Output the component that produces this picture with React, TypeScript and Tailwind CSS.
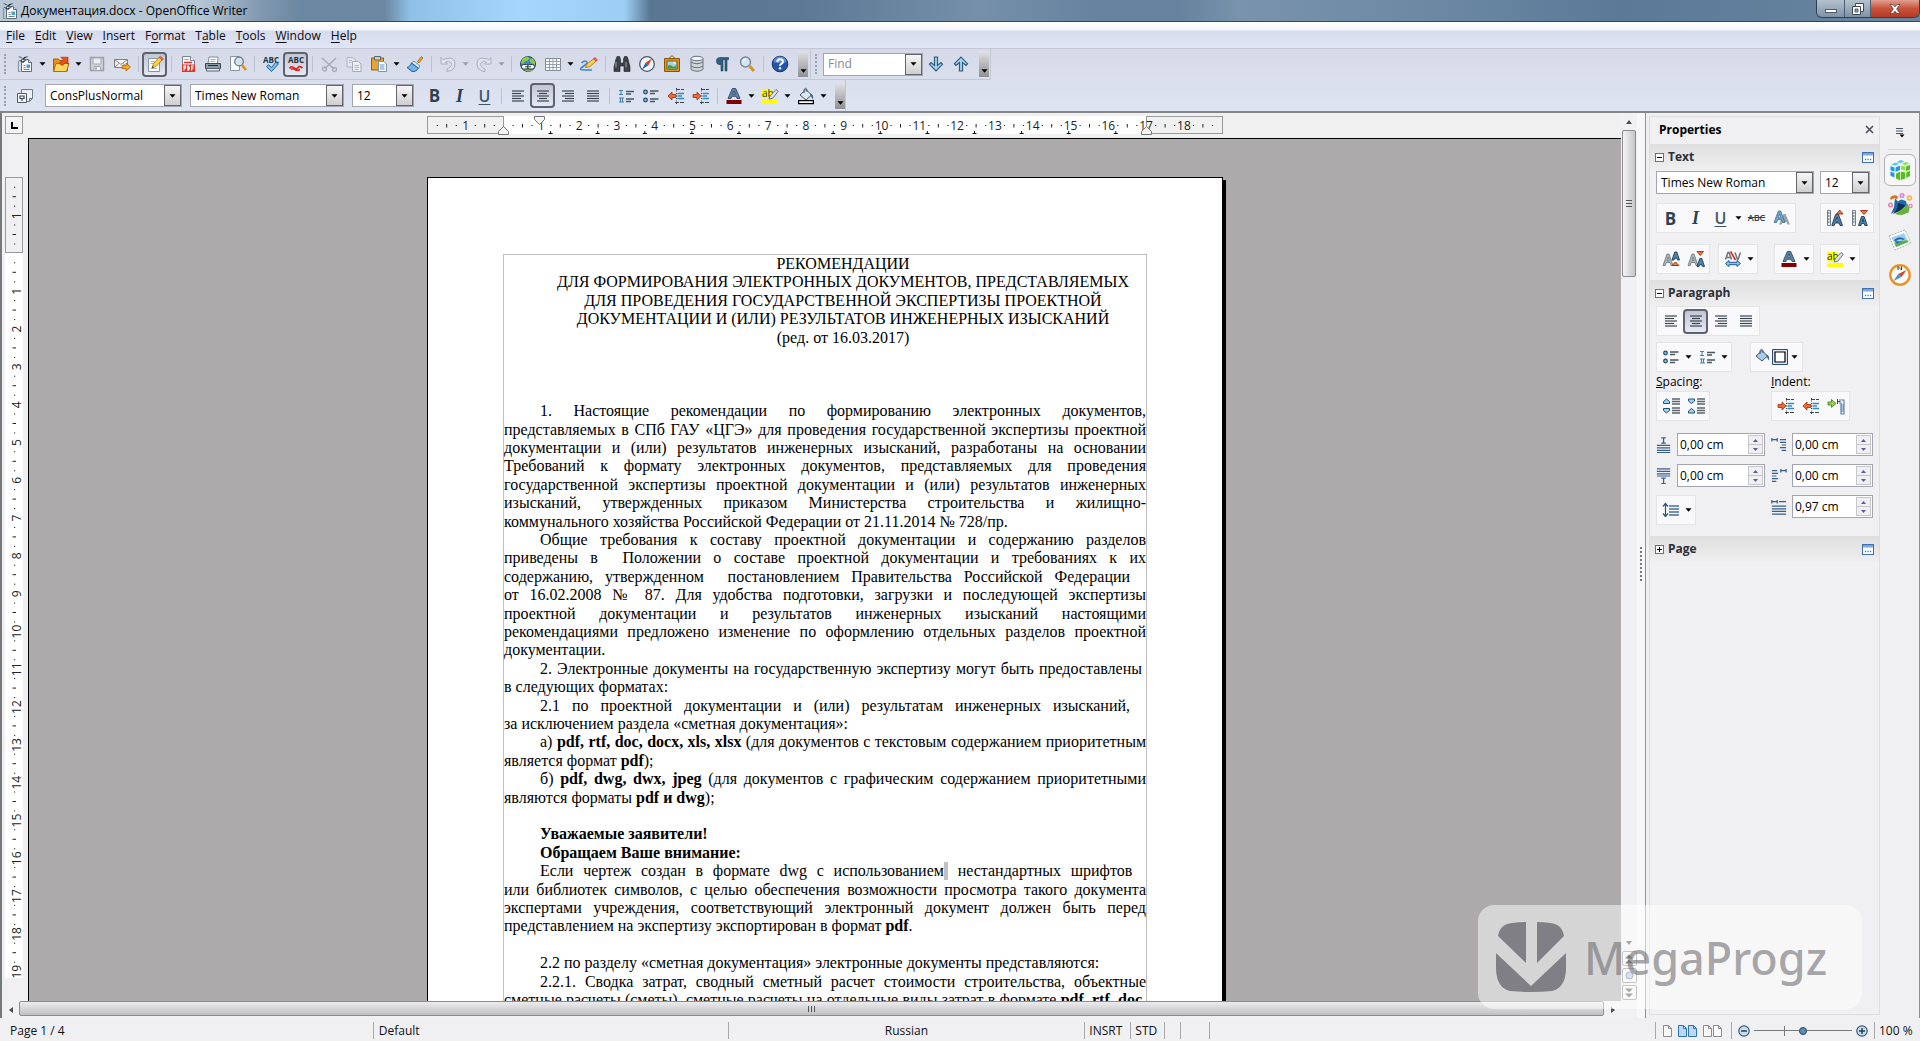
import type { ReactNode } from 'react'

// ---------- icon primitives ----------

type IconProps = { size?: number; children: ReactNode }

function Svg({ size = 18, children }: IconProps) {
  return (
    <svg width={size} height={size} viewBox="0 0 18 18" fill="none" aria-hidden="true" className="shrink-0">
      {children}
    </svg>
  )
}

const INK = '#2c4252'
const BLUE = '#2e75b6'

function Caret({ color = '#000' }: { color?: string }) {
  return (
    <svg width="7" height="4" viewBox="0 0 7 4" aria-hidden="true" className="shrink-0">
      <path d="M0.5 0.3h6L3.5 3.8z" fill={color} />
    </svg>
  )
}

function DocIcon() {
  return (
    <Svg>
      <path d="M5.500 4.500h7l3 3v9h-10z" fill="#fff" stroke="#5b6c7a" />
      <path d="M2.500 6v10.500h2" stroke="#8796a2" strokeWidth="1.200" />
      <path d="M12.500 4.500v3h3" fill="#dbe4ea" stroke="#5b6c7a" />
      <path d="M2 1.800q3-.8 4.500 1.700Q9 .8 12.500 1.800 9.500 2.300 7.500 4.600 5 2.500 2 1.800z" fill="#1d3444" />
      <path d="M2.500 5.500q2.500-1 4 1Q8 4.800 11 5.500 8.500 6 7 8 5 6 2.500 5.500z" fill="#1d3444" />
      <path d="M7.500 10.500h2M7.500 12.500h2M7.500 14.500h6" stroke="#6d8291" />
      <path d="M10.500 9.500H14V13h-3.500z" fill="#4d9bd6" />
    </Svg>
  )
}

function OpenIcon() {
  return (
    <Svg>
      <path d="M1.500 4h5l1 1.500h8V16h-14z" fill="#e8921a" stroke="#a85d0c" />
      <path d="M4 8.500h13L14.500 16.500h-13z" fill="#ffd65a" stroke="#b36a10" />
      <path d="M7 8.500l4-4-2.200-2.200H16v7l-2.200-2.300-3.300 3.500z" fill="#e2541e" stroke="#a5320d" strokeWidth=".7" />
    </Svg>
  )
}

function SaveIcon() {
  return (
    <Svg>
      <path d="M2.500 2.500h13v13h-13z" fill="#d0d3dc" stroke="#9a9ea9" strokeWidth="1.500" />
      <path d="M5 3h8v6H5z" fill="#eceef3" stroke="#a4a8b2" />
      <path d="M6 11.500h6.500v4H6z" fill="#f3f4f7" stroke="#a4a8b2" />
      <path d="M7 12.500h2v2H7z" fill="#9a9ea9" />
    </Svg>
  )
}

function MailIcon() {
  return (
    <Svg>
      <path d="M1.500 4.500h13v8h-13z" fill="#f4f4f4" stroke="#7d8085" />
      <path d="M1.500 4.500l6.500 5 6.500-5M1.500 12.500l4.500-4M14 12l-4-3.500" stroke="#8b8e93" />
      <path d="M9 10.500h4V8l4.500 4-4.500 4v-2.500H9z" fill="#f5a623" stroke="#a8650d" strokeWidth=".8" />
    </Svg>
  )
}

function EditIcon() {
  return (
    <Svg>
      <path d="M2.500 3.500h11v13h-11z" fill="#fff" stroke="#7e98aa" />
      <path d="M4.500 6.500h4M4.500 8.500h3M4.500 13.500h6.500" stroke="#9fb4c3" />
      <path d="M6 13l1.500-4.500L13.500 2 16.500 4.500 10.300 11.300z" fill="#fbd13b" stroke="#a87410" strokeWidth=".8" />
      <path d="M13 2.500l1.500-1.300 3 2.600-1.400 1.500z" fill="#e06a6a" stroke="#a83b3b" strokeWidth=".6" />
      <path d="M6 13l.7-2 1.200 1.200z" fill="#222" />
    </Svg>
  )
}

function PdfIcon() {
  return (
    <Svg>
      <path d="M3.500 1.500h8l4 4v5h-12z" fill="#f1f4f6" stroke="#7b868f" />
      <path d="M11.500 1.500v4h4" stroke="#7b868f" fill="#fff" />
      <path d="M5.500 4.500h4" stroke="#9aa6af" />
      <path d="M5 7.500h8" stroke="#d8362f" strokeWidth="1.500" />
      <path d="M3 9.500h13V17H3z" fill="#d8362f" />
      <path d="M5 15.800v-5h1.200q1.200 1.300 0 2.500H5M8.800 11v4.300h.6q1.800-2 0-4.300zM12.700 15.800v-4.800h2.300M12.700 13.300h1.800" stroke="#fff" strokeWidth="1.100" />
    </Svg>
  )
}

function PrintIcon() {
  return (
    <Svg>
      <path d="M5 2h9l-.5 7H4z" fill="#fff" stroke="#7d8992" />
      <path d="M6.500 4.500h5M6.200 6.500h5" stroke="#86b3d6" />
      <path d="M1.500 8.500h15v5h-15z" fill="#8d9ba6" stroke="#3a4954" />
      <path d="M2.500 13.500h13v2.500h-13z" fill="#e4e8eb" stroke="#56646f" />
      <path d="M4 10.500h10" stroke="#202b33" />
    </Svg>
  )
}

function PreviewIcon() {
  return (
    <Svg>
      <path d="M1.500 1.500h9v14h-9z" fill="#fff" stroke="#8994a0" />
      <circle cx="10" cy="6.500" r="4.300" fill="#cfe3f3" stroke="#6c7c8b" strokeWidth="1.300" />
      <path d="M13 10l4 5" stroke="#d9921c" strokeWidth="2.600" />
    </Svg>
  )
}

function AbcIcon({ wave = false }: { wave?: boolean }) {
  return (
    <Svg>
      <text x="9" y="8" textAnchor="middle" fontSize="8" fontWeight="700" fontFamily="Open Sans" fill="#1f3340">
        ABC
      </text>
      {wave ? (
        <path d="M2.500 13.500q1.500-3 4.200-.8t4.300 0 4.500.3M4 14.500q2-1.500 4 0t5 0" stroke="#d8251c" strokeWidth="1.700" />
      ) : (
        <path d="M4.500 11.500l2-1.800 3 2.800 4.500-5.500 2.500 1.800-7 7.700z" fill="#7cc0ef" stroke="#225f96" />
      )}
    </Svg>
  )
}

function CutIcon() {
  return (
    <Svg>
      <path d="M2 3l12 11M16 3L5 13.500" stroke="#a9acb7" strokeWidth="1.600" />
      <circle cx="4.500" cy="14" r="2" stroke="#a9acb7" strokeWidth="1.300" />
      <circle cx="14.500" cy="14.500" r="2" stroke="#a9acb7" strokeWidth="1.300" />
    </Svg>
  )
}

function CopyIcon() {
  return (
    <Svg>
      <path d="M2 2.500h6l2.500 2.500v7H2z" fill="#e3e6ee" stroke="#b0b4bf" />
      <path d="M7.500 6.500h6l2.500 2.500v7.500H7.500z" fill="#eceef4" stroke="#a9adb9" />
      <path d="M9.500 10.500h4.500M9.500 12.500h4.500M9.500 14.500h4M4 5.500h3M4 7.500h2.500" stroke="#b4b8c3" />
    </Svg>
  )
}

function PasteIcon() {
  return (
    <Svg>
      <path d="M1.500 3h12v12h-12z" fill="#e8a52b" stroke="#94600b" />
      <path d="M4.500 1.500h6V5h-6z" fill="#c7cdd3" stroke="#5e6871" />
      <path d="M8.500 6.500h5.500l2.500 2.500v7.500h-8z" fill="#fff" stroke="#7593ab" />
      <path d="M10 10h4.500M10 12h4.500M10 14h4.500" stroke="#5d92bd" />
    </Svg>
  )
}

function BrushIcon() {
  return (
    <Svg>
      <path d="M11.500 6.500l4-5L17 3l-4.200 5z" fill="#f0a533" stroke="#a05d0a" strokeWidth=".8" />
      <path d="M8 6l6 5-1.500 2.200L5.500 8z" fill="#dfe9f1" stroke="#4d7fa8" strokeWidth=".8" />
      <path d="M5.500 8l7 5.200c-1.500 2.300-4 3.800-6.500 3.300L1 12.500c2-.5 3.500-2 4.500-4.500z" fill="#62a8e5" stroke="#23609c" />
      <path d="M3.500 13l3-2.500M5.500 14.800l3-3M8 15.500l2.500-2.500" stroke="#a5cff2" />
    </Svg>
  )
}

function TurnIcon({ flip = false }: { flip?: boolean }) {
  return (
    <svg width="18" height="18" viewBox="0 0 18 18" fill="none" aria-hidden="true" className={flip ? '-scale-x-100' : ''}>
      <path
        d="M2 2.500v6.500h6.500L6.500 7q3.500-2 5.500 1t-4 6v2.500q8-1 8-7.500T10 3.200 4.300 4.800z"
        fill="#dde1ec"
        stroke="#acb0bc"
      />
    </svg>
  )
}

function LinkIcon() {
  return (
    <Svg>
      <circle cx="9" cy="9" r="7.500" fill="#3f86c6" stroke="#24476b" />
      <path d="M3 5q2-3.500 6-3.500l1.500 2L8 6 5.500 6.500 4 9 2 8zM11 4l3-.5 2 3.500v3l-3-1.500L11 7zM4 13l5 2.500 5-1.500-1 1.500-4 1.300-4-1.800z" fill="#8fca3f" />
      <rect x="2.500" y="9.500" width="7" height="4.500" rx="2.200" fill="#fff" stroke="#2b3b49" />
      <rect x="8.500" y="9.500" width="7" height="4.500" rx="2.200" fill="#fff" stroke="#2b3b49" />
      <path d="M6 11.800h6" stroke="#2b3b49" />
    </Svg>
  )
}

function TableIcon() {
  return (
    <Svg>
      <path d="M1.500 3.500h15v12h-15z" fill="#fff" stroke="#7f8c98" />
      <path d="M1.500 6.500h15M1.500 9.500h15M1.500 12.500h15M5.500 3.500v12M9 3.500v12M12.500 3.500v12" stroke="#94a0ab" />
    </Svg>
  )
}

function DrawIcon() {
  return (
    <Svg>
      <path d="M1.500 8q3-3 5-1.500T3 11.500t1 3.500 8 0" stroke="#3a86cc" strokeWidth="1.500" />
      <path d="M5.500 12.500L7 9l7-5.500 2.200 2.500-6.500 5.800z" fill="#fbcf4a" stroke="#a87410" strokeWidth=".8" />
      <path d="M13.500 3.800L15 2.500l2.500 2.300-1.300 1.500z" fill="#e06a6a" stroke="#a83b3b" strokeWidth=".6" />
    </Svg>
  )
}

function BinocularsIcon() {
  return (
    <Svg>
      <path d="M3 4l1-2.500h2.500L7.500 4v4h3V4l1-2.500H14L15 4l2 8v4.500h-6V11H7v5.500H1V12z" fill="#3c4247" stroke="#1d2124" strokeWidth=".6" />
      <path d="M3 12.500V7M13 12.500V7" stroke="#8b959c" strokeWidth="1.200" />
    </Svg>
  )
}

function CompassIcon() {
  return (
    <Svg>
      <circle cx="9" cy="9" r="7.300" fill="#f3f7fa" stroke="#4a5a68" strokeWidth="1.300" />
      <path d="M14 3.500L7.500 7.800l2.800 2.600z" fill="#d83a26" />
      <path d="M4 14.500l3.500-6.700 2.800 2.600z" fill="#2c62ae" />
    </Svg>
  )
}

function GalleryIcon() {
  return (
    <Svg>
      <path d="M9 .5l3 3H6z" stroke="#7a5312" />
      <path d="M1.500 3.500h15v13h-15z" fill="#d8931f" stroke="#8a5608" />
      <path d="M4 6h10v8H4z" fill="#9ed2f2" stroke="#704708" strokeWidth=".8" />
      <path d="M4.500 13.500v-2q2-2.500 4.500-.5t4.500-1.500v4z" fill="#4e9a3c" />
      <circle cx="11.500" cy="8" r="1.200" fill="#fff3a0" />
    </Svg>
  )
}

function DatabaseIcon() {
  return (
    <Svg>
      <path d="M3 3.500v11q6 3.500 12 0v-11" fill="#cfd4d8" stroke="#69747d" />
      <path d="M3 7q6 3.500 12 0M3 11q6 3.500 12 0" stroke="#69747d" />
      <ellipse cx="9" cy="3.500" rx="6" ry="2.200" fill="#f3f5f6" stroke="#69747d" />
    </Svg>
  )
}

function PilcrowIcon() {
  return (
    <Svg>
      <path d="M15.500 2.500H7a3.600 3.600 0 000 7.200h1V16h2V4.700h2V16h2V4.700h1.500z" fill="#2f5e80" stroke="#1e4361" strokeWidth=".6" />
    </Svg>
  )
}

function LensIcon() {
  return (
    <Svg>
      <circle cx="7.500" cy="7" r="5" fill="#cfe6f6" stroke="#7a8894" strokeWidth="1.500" />
      <path d="M11.500 11l4.500 5" stroke="#d9921c" strokeWidth="3" />
      <path d="M5 6.500q.5-2 2.500-2.200" stroke="#fff" strokeWidth="1.300" />
    </Svg>
  )
}

function HelpIcon() {
  return (
    <Svg>
      <circle cx="9" cy="9" r="7.800" fill="#2455ab" stroke="#16356f" />
      <path d="M2.500 7a6.600 6.600 0 0113 0q-6.500 2.500-13 0z" fill="#5d8ad0" />
      <path d="M6.300 7q0-2.800 2.800-2.800T11.900 6.700q0 1.300-1.500 2.100T9 10.800" stroke="#fff" strokeWidth="1.900" />
      <circle cx="9" cy="13.300" r="1.200" fill="#fff" />
    </Svg>
  )
}

function FindArrow({ up = false }: { up?: boolean }) {
  return (
    <svg width="16" height="18" viewBox="0 0 16 18" fill="none" aria-hidden="true" className={up ? 'rotate-180' : ''}>
      <path d="M6.500 2h3v8.500L13 7.500l1.500 1.800L8 15.800 1.500 9.300 3 7.500l3.500 3z" fill="#a8d3ec" stroke="#2d5c7d" strokeWidth="1.200" />
    </svg>
  )
}

function StylesIcon() {
  return (
    <Svg>
      <path d="M5.500 2.500h11v9l-3 3h-8z" fill="#eceff3" stroke="#6d7a87" />
      <path d="M16.500 11.500h-3v3" stroke="#6d7a87" />
      <path d="M1.500 6.500h9v9h-9z" fill="#f5f7f9" stroke="#4f5c68" />
      <path d="M4 9h4v2.500H4zM6 11.500V14" stroke="#3f4c58" strokeWidth="1.200" />
    </Svg>
  )
}

// Character style buttons draw their letter as text
function Letter({ kind }: { kind: 'B' | 'I' | 'U' }) {
  if (kind === 'B') return <span className="text-[17px] leading-none font-bold text-[#2c4252]">B</span>
  if (kind === 'I') return <span className="font-['Liberation_Serif',serif] text-lg leading-none font-bold text-[#2c4252] italic">I</span>
  return <span className="text-base leading-none font-semibold text-[#3d5768] underline underline-offset-2">U</span>
}

const alignRows = {
  left: [[3, 15], [3, 12], [3, 15], [3, 12], [3, 15]],
  center: [[3, 15], [5, 13], [3, 15], [5, 13], [3, 15]],
  right: [[3, 15], [6, 15], [3, 15], [6, 15], [3, 15]],
  justify: [[3, 15], [3, 15], [3, 15], [3, 15], [3, 15]],
}

function AlignIcon({ kind, color = '#3a4650' }: { kind: keyof typeof alignRows; color?: string }) {
  return (
    <Svg>
      {alignRows[kind].map(([from, to], i) => (
        <path key={i} d={`M${from} ${4 + i * 2.5}H${to}`} stroke={color} strokeWidth="1.200" />
      ))}
    </Svg>
  )
}

function NumberedIcon() {
  return (
    <Svg>
      <path d="M2 3.500h4M4 3.500v4M2 7.500h4M2 11h5M2 15h5M3.500 11v4M5.500 11v4" stroke="#4385a6" strokeWidth="1.100" />
      <path d="M9 4.500h8M9 7h5M9 12h8M9 14.500h5" stroke="#4b565f" strokeWidth="1.300" />
    </Svg>
  )
}

function BulletIcon() {
  return (
    <Svg>
      <circle cx="3.500" cy="5" r="1.800" fill="#7fc0e8" stroke="#1f4c6b" strokeWidth="1.200" />
      <circle cx="3.500" cy="13" r="1.800" fill="#7fc0e8" stroke="#1f4c6b" strokeWidth="1.200" />
      <path d="M8 4h8.500M8 6.500h5M8 12h8.500M8 14.500h5" stroke="#4b565f" strokeWidth="1.300" />
    </Svg>
  )
}

function IndentIcon({ increase = false }: { increase?: boolean }) {
  return (
    <Svg>
      <path d="M9 2.500h8M8 15.500h9" stroke="#3a4650" strokeWidth="1.200" strokeDasharray="4 1" />
      <path d="M10.500 6.500h6.500M10.500 9h4.500M10.500 11.500h6.500" stroke="#2f8ac6" strokeWidth="1.600" />
      <path d="M9.500 1v16" stroke="#3a4650" strokeDasharray="1 1.500" />
      <path
        d={increase ? 'M9 9L5 5v2.500H1v3h4V13z' : 'M1 9l4-4v2.500h4v3H5V13z'}
        fill="#ee6b32"
        stroke="#9c2f0c"
        strokeWidth=".8"
      />
    </Svg>
  )
}

function FontColorIcon() {
  return (
    <Svg>
      <path d="M3 11.500L7.300 1.500h3.400L15 11.500h-3l-.8-2.200H6.800L6 11.500zM7.700 7.200h2.600L9 3.800z" fill="#5c86a8" stroke="#1f3d55" strokeWidth=".8" />
      <path d="M1.500 13h15v4h-15z" fill="#800000" />
    </Svg>
  )
}

function HighlightIcon() {
  return (
    <Svg>
      <path d="M1 2h10v9H1zM1 13h16v4H1z" fill="#ffff00" />
      <text x="1" y="10" fontSize="10" fontFamily="Open Sans" fill="#1c2a33">
        ab
      </text>
      <path d="M8 12l1-3 6-6.500 2.200 1.800-5.500 7z" fill="#dfe3e6" stroke="#4c565e" strokeWidth=".8" />
    </Svg>
  )
}

function BucketIcon({ bar = true }: { bar?: boolean }) {
  return (
    <Svg>
      <path d="M3 8l6-5.500 5.500 5.500-5.500 5z" fill={bar ? '#dde6ec' : '#a9cdf0'} stroke="#3b566c" />
      <path d="M7 6V2.500q1.500-2.500 3 0V5" stroke="#3b566c" />
      <path d="M13 6.500q4 .5 3 6-1.500-2-2.500-4z" fill="#3a6a94" />
      {bar && <path d="M1.600 13.600h14.800v3H1.600z" fill="#fff" stroke="#000" strokeWidth="1.200" />}
    </Svg>
  )
}

// ---------- sidebar icons ----------

function StrikeIcon() {
  return <span className="text-[9px] font-semibold text-[#3b4146] line-through">ABC</span>
}

function ShadowAIcon() {
  return (
    <Svg>
      <path d="M6 15.500L10.500 5h2L17 15.500h-2.500l-1-2.500H9.700l-1 2.500z" fill="#9aa4ac" />
      <path d="M1 13.500L5.300 2h2.500l4.200 11.500H9.500l-1-2.800H4.700l-1 2.800zM5.300 8.800h2.500L6.500 5z" fill="#6fa5cb" stroke="#2b5675" strokeWidth=".6" />
    </Svg>
  )
}

function GrowIcon({ down = false }: { down?: boolean }) {
  return (
    <Svg>
      <path d="M1.500 1.500h3v15h-3z" fill="#e6eaed" stroke="#6f7f8b" />
      <path d="M2 4h1.500M2 7h1.500M2 10h1.500M2 13h1.500" stroke="#3f4c56" />
      <path
        d={down ? 'M7.500 16.500l3-9h2.600l3.200 9h-2.500l-.6-2h-2.600l-.6 2zM11.200 12.500h1.500l-.8-2.600z' : 'M5.800 16.500L9.500 5.500h3l4 11H14l-.8-2.500H9l-.8 2.500zM9.700 12h2.600L11 8.200z'}
        fill="#4f83aa"
        stroke="#1f3d55"
        strokeWidth=".9"
      />
      <path d={down ? 'M9.500 1.500h7L13 5.500z' : 'M10.500 5h6.500L13.800 1.200z'} fill="#f0783c" stroke="#a8290c" strokeWidth=".9" />
    </Svg>
  )
}

function ScriptIcon({ up = false }: { up?: boolean }) {
  return (
    <Svg>
      <path d="M1 15.500L5 4h2l4 11.500H9L8 12.500H4.200L3.200 15.500zM5 10.500h2.200L6 7z" fill="#aeb6bc" stroke="#6b757c" strokeWidth=".8" />
      <path
        d={up ? 'M10 10l2.800-8h2L17.500 10h-2l-.6-1.800h-2.200L12 10z' : 'M10 16.500l2.800-8h2l2.700 8h-2l-.6-1.800h-2.200L12 16.500z'}
        fill="#4f83aa"
        stroke="#1f3d55"
        strokeWidth=".9"
      />
      <path d={up ? 'M10 15.500h7L13.500 12z' : 'M10 1.500h6.500L13.300 5.500z'} fill="#f0783c" stroke="#a8290c" strokeWidth=".9" />
    </Svg>
  )
}

function KerningIcon() {
  return (
    <Svg>
      <path d="M1.500 9.500L4 2.500h1l2.500 7M2.500 7.500H6.500M11 2.500l2.500 7h.5l2.500-7" stroke="#6d757b" strokeWidth="1.500" />
      <path d="M6.500 1.500l5 8.500" stroke="#d6281c" strokeWidth="1.600" />
      <path d="M1.500 13.500L5 10.500v1.800h8v-1.800l3.500 3-3.500 3v-1.800H5v1.800z" fill="#8cc6f0" stroke="#1f5a95" />
    </Svg>
  )
}

function FrameSwatch() {
  return (
    <Svg>
      <path d="M1.500 1.500h15v15h-15z" fill="#dbe6f2" stroke="#2b4b74" />
      <path d="M4 4h10v10H4z" fill="#fff" stroke="#000" strokeWidth="1.200" />
    </Svg>
  )
}

function SpacingIcon({ inward = false }: { inward?: boolean }) {
  return (
    <Svg>
      <path
        d={inward ? 'M1.500 2h6v2L4.500 6.500 1.500 4zM1.500 16v-2l3-2.500 3 2.500v2z' : 'M1.500 6.500v-2L4.500 2l3 2.500v2zM1.500 11.500h6v2l-3 2.500-3-2.500z'}
        fill="#9fd0ef"
        stroke="#1c5078"
      />
      <path d="M10 2h8M10 4.500h8M10 7h8M10 11h8M10 13.500h8M10 16h8" stroke="#5a646c" strokeWidth="1.300" />
    </Svg>
  )
}

function HangingIcon() {
  return (
    <Svg>
      <path d="M1 5h3.500V2.500L9 6.500l-4.500 4V8H1z" fill="#97d24b" stroke="#3e7a14" strokeWidth=".8" />
      <path d="M10.500 2v5M10.500 4.500h3" stroke="#2c4b6b" />
      <path d="M12 3h5v14h-3V6h-2M14 8h3M14 10h3M14 12h3M14 14h3" stroke="#5d80a8" strokeWidth="1.200" />
    </Svg>
  )
}

const fieldIconPaths = {
  above: 'M6 1h5M8.500 1v6M6 7h5M1 9.500h15M1 12.300h15M1 15h15M1 17.500h15',
  below: 'M1 1h15M1 3.800h15M1 6.500h15M1 9h15M6 11.500h5M8.500 11.500v6M6 17.500h5',
  before: 'M1 3h6M1 1v4M7 1v4M10 3h7M10 6h7M12 9h5M10 12h7M12 15h5',
  after: 'M1 3h6M1 6h7M1 9h5M1 12h7M1 15h5M11 3h6M11 1v4M17 1v4',
  first: 'M1 3h6M1 1v4M7 1v4M9 3h8M1 8h16M1 11h16M1 14h16M1 17h16',
}

function FieldIcon({ kind }: { kind: keyof typeof fieldIconPaths }) {
  return (
    <Svg size={16}>
      <path d={fieldIconPaths[kind]} stroke="#36618f" strokeWidth="1.400" />
    </Svg>
  )
}

function LineSpacingIcon() {
  return (
    <Svg>
      <path d="M3.500 4v10M1 5.500l2.500-3 2.500 3M1 12.500l2.500 3 2.500-3" stroke="#2d5673" strokeWidth="1.200" />
      <path d="M7 5h10M7 8h10M7 11h10M7 14h10" stroke="#456f9c" strokeWidth="1.500" />
    </Svg>
  )
}

function CubeIcon() {
  return (
    <svg width="24" height="24" viewBox="0 0 24 24" aria-hidden="true">
      <path d="M3 6l8-4 10 3v13l-9 4-9-4z" fill="#fff" />
      <path d="M3 6.500l4.500-2 4 1.200-4.300 2zM8.500 4l4-2 4 1.300-4 2z" fill="#5bc8f5" />
      <path d="M2.500 8l4 1.500v4.300l-4-1.500zM7.500 9.500l4.500-2v4.500l-4.500 2zM2.500 13.500l4 1.500v4.500l-4-1.700z" fill="#1e9be0" />
      <path d="M13.500 6l4-2 4 1.200-4 2zM13 7.500l4.300 1v4.300l-4.300-1.200z" fill="#8ee04e" />
      <path d="M18 8.500l4-1.800v4.800l-4 1.800zM8 15.500l4.300-2 0 4.500v4.500L8 20.500zM13 13.500l4.300 1v6L13 22zM18.200 14.500l3.800-2v5.500l-3.800 2z" fill="#55bf22" />
    </svg>
  )
}

function StarsIcon() {
  return (
    <svg width="26" height="26" viewBox="0 0 26 26" aria-hidden="true">
      <path d="M3 6q3-4.500 8-1.500L10 7.500Q7 5 4 8z" fill="#d9731f" />
      <path d="M8 6.500l3 3 3-2 5 1.500 1 5-6 3-5 2-5 3 3-7z" fill="#1d6aa8" />
      <path d="M11 11l7 2-3 5-9 4 4-5z" fill="#10304f" />
      <path d="M15 17q4-2 5-6 4 5 1.500 9.500L15 23q-4 0-7-1z" fill="#67b33a" />
      <circle cx="15" cy="3.500" r="2.500" fill="#d77be0" />
      <circle cx="22.500" cy="6" r="2.700" fill="#f2b84c" />
      <circle cx="3.500" cy="13" r="2.500" fill="#f07cae" />
      <circle cx="23.500" cy="14" r="2.300" fill="#f07cae" />
      <circle cx="15" cy="3.500" r=".9" fill="#fff" />
      <circle cx="22.500" cy="6" r=".9" fill="#fff" />
      <circle cx="3.500" cy="13" r=".9" fill="#fff" />
      <circle cx="23.500" cy="14" r=".9" fill="#fff" />
    </svg>
  )
}

function PhotoIcon() {
  return (
    <svg width="26" height="26" viewBox="0 0 26 26" aria-hidden="true">
      <path d="M2 8l16-6 6 13-16 7z" fill="#fff" stroke="#a9b8a4" strokeDasharray="2 1" />
      <path d="M4.500 9.500L17 5l4.500 9L9 19z" fill="#9fd0f0" />
      <path d="M7.500 15q5-3 13.500-2.500l.5 1.500L9 19z" fill="#5fae45" />
      <path d="M7 12q5-5 11-1l-2 1q-3-2-7 1l5 1-4 1.500z" fill="#2a6cb0" />
    </svg>
  )
}

function NavigatorIcon() {
  return (
    <svg width="24" height="24" viewBox="0 0 24 24" aria-hidden="true">
      <circle cx="12" cy="12" r="9.700" fill="#fbfaf6" stroke="#e8922a" strokeWidth="2.400" />
      <path d="M10 7V3.500l3.500 3.500V3.500" stroke="#3b4146" fill="none" />
      <path d="M18.500 7l-5 7-3.300-3z" fill="#d8452c" />
      <path d="M5.500 18l4.700-7 3.300 3z" fill="#4f8fd0" />
    </svg>
  )
}

function MoreIcon() {
  return (
    <svg width="12" height="11" viewBox="0 0 12 11" aria-hidden="true">
      <rect x=".5" y=".5" width="11" height="10" fill="#fff" stroke="#3f6fae" />
      <path d="M1 1h10v2.500H1z" fill="#7ea8dc" />
      <path d="M3 7.500h1.200M5.500 7.500h1.200M8 7.500h1.200" stroke="#3f6fae" strokeWidth="1.300" />
    </svg>
  )
}

// ---------- toolbar parts ----------

function Tool({ label, active = false, children }: { label: string; active?: boolean; children: ReactNode }) {
  return (
    <button
      aria-label={label}
      aria-pressed={active}
      className={
        active
          ? 'flex size-[25px] shrink-0 items-center justify-center rounded-sm border-2 border-[#5d6370] bg-linear-to-b from-[#c3c6d2] to-[#e6e9f4]'
          : 'flex size-[25px] shrink-0 items-center justify-center'
      }
    >
      {children}
    </button>
  )
}

function Drop({ label, muted = false }: { label: string; muted?: boolean }) {
  return (
    <button aria-label={label} className="flex h-[25px] w-[11px] shrink-0 items-center justify-center">
      <Caret color={muted ? '#9a9eab' : '#000'} />
    </button>
  )
}

function Sep() {
  return (
    <span className="flex w-2 shrink-0 justify-center">
      <span className="h-4 w-px bg-[#bcc0cf]" />
    </span>
  )
}

function Grip() {
  return <span className="mr-[5px] ml-1 h-5 w-[3px] shrink-0 border-l-2 border-dotted border-[#9a9eae]" />
}

function Overflow() {
  return (
    <button
      aria-label="More controls"
      className="ml-1.5 flex h-[26px] w-[10px] shrink-0 items-end justify-center bg-linear-to-b from-[#e2e2e6] to-[#8f9094] pb-1"
    >
      <Caret />
    </button>
  )
}

function Combo({ label, value, className }: { label: string; value: string; className: string }) {
  return (
    <span className={`flex h-[23px] shrink-0 items-stretch border border-[#a3a6b0] bg-white ${className}`}>
      <select aria-label={label} className="min-w-0 flex-1 appearance-none pl-1 text-xs outline-none">
        <option>{value}</option>
      </select>
      <ComboArrow />
    </span>
  )
}

function ComboArrow() {
  return (
    <span className="flex w-[17px] shrink-0 items-center justify-center border border-[#63666c] bg-linear-to-b from-[#f6f6f6] to-[#cfcfd1]">
      <Caret />
    </span>
  )
}

function TitleBar() {
  return (
    <header className="relative flex h-[22px] shrink-0 items-center border-b border-[#33475c] bg-[linear-gradient(90deg,#b9c8d6_0,#b6c6d5_200px,#8199b0_260px,#6c87a2_300px,#6c87a2_385px,#8fc0e6_410px,#a5d6fb_520px,#9ccdf2_625px,#5a7692_650px,#5c7894_800px,#7690aa_980px,#66829e_1100px,#66829e_1180px,#7993ac_1240px,#6f8aa5_1400px,#5a7a98_1620px,#6985a0_100%)] pl-px">
      <DocIcon />
      <h1 className="ml-0.5 text-xs text-black">Документация.docx - OpenOffice Writer</h1>
      <div className="ml-auto flex h-[18px] self-start overflow-hidden rounded-b-md border border-t-0 border-[#2f3e4e]">
        <button aria-label="Minimize" className="flex w-7 items-center justify-center border-r border-[#4a5c6e] bg-linear-to-b from-[#b4c2cf] to-[#7f93a6] pt-1">
          <span className="h-1 w-3 border border-[#4a5a69] bg-white" />
        </button>
        <button aria-label="Restore" className="flex w-[26px] items-center justify-center border-r border-[#4a5c6e] bg-linear-to-b from-[#b4c2cf] to-[#7f93a6]">
          <svg width="12" height="12" viewBox="0 0 12 12" fill="none">
            <path d="M3.500 .5h8v8h-8z" fill="#fff" stroke="#3c4a58" />
            <path d="M.5 3.500h8v8h-8z" fill="#fff" stroke="#3c4a58" />
            <path d="M3 6h3v3H3z" fill="#8ea0b1" stroke="#3c4a58" strokeWidth=".8" />
          </svg>
        </button>
        <button aria-label="Close" className="flex w-[48px] items-center justify-center bg-linear-to-b from-[#e0a093] via-[#c9503a] to-[#b53c22]">
          <svg width="12" height="10" viewBox="0 0 12 10">
            <path d="M1 .5h3l2 2.300L8 .5h3L7.700 5 11 9.500H8L6 7.200 4 9.500H1L4.300 5z" fill="#fff" stroke="#5d3a35" strokeWidth=".8" />
          </svg>
        </button>
      </div>
    </header>
  )
}

const menus = [
  ['', 'F', 'ile'],
  ['', 'E', 'dit'],
  ['', 'V', 'iew'],
  ['', 'I', 'nsert'],
  ['F', 'o', 'rmat'],
  ['T', 'a', 'ble'],
  ['', 'T', 'ools'],
  ['', 'W', 'indow'],
  ['', 'H', 'elp'],
]

function MenuBar() {
  return (
    <nav className="flex h-[27px] shrink-0 items-center gap-2.5 border-b border-[#c4c8d6] bg-[linear-gradient(180deg,#ffffff_0,#f4f7fd_8px,#d6dbea_9px,#e1e6f6_100%)] px-1.5 pt-0.5">
      {menus.map(([before, key, after]) => (
        <button key={before + key + after} className="text-xs text-[#0a0a14]">
          {before}
          <span className="underline underline-offset-2">{key}</span>
          {after}
        </button>
      ))}
    </nav>
  )
}

function StandardToolbar() {
  return (
    <div className="flex h-[31px] shrink-0 items-center">
      <div className="flex h-full items-center border-r border-b border-[#c3c7d5]">
        <Grip />
        <Tool label="New"><DocIcon /></Tool>
        <Drop label="New document type" />
        <Tool label="Open"><OpenIcon /></Tool>
        <Drop label="Recent documents" />
        <Tool label="Save"><SaveIcon /></Tool>
        <Tool label="Send by e-mail"><MailIcon /></Tool>
        <Sep />
        <Tool label="Edit file" active><EditIcon /></Tool>
        <Sep />
        <Tool label="Export as PDF"><PdfIcon /></Tool>
        <Tool label="Print"><PrintIcon /></Tool>
        <Tool label="Page preview"><PreviewIcon /></Tool>
        <Sep />
        <Tool label="Spelling"><AbcIcon /></Tool>
        <Tool label="Auto spellcheck" active><AbcIcon wave /></Tool>
        <Sep />
        <Tool label="Cut"><CutIcon /></Tool>
        <Tool label="Copy"><CopyIcon /></Tool>
        <Tool label="Paste"><PasteIcon /></Tool>
        <Drop label="Paste special" />
        <Tool label="Format paintbrush"><BrushIcon /></Tool>
        <Sep />
        <Tool label="Undo"><TurnIcon /></Tool>
        <Drop label="Undo list" muted />
        <Tool label="Redo"><TurnIcon flip /></Tool>
        <Drop label="Redo list" muted />
        <Sep />
        <Tool label="Hyperlink"><LinkIcon /></Tool>
        <Tool label="Table"><TableIcon /></Tool>
        <Drop label="Table size" />
        <Tool label="Show draw functions"><DrawIcon /></Tool>
        <Sep />
        <Tool label="Find and replace"><BinocularsIcon /></Tool>
        <Tool label="Navigator"><CompassIcon /></Tool>
        <Tool label="Gallery"><GalleryIcon /></Tool>
        <Tool label="Data sources"><DatabaseIcon /></Tool>
        <Tool label="Nonprinting characters"><PilcrowIcon /></Tool>
        <Tool label="Zoom"><LensIcon /></Tool>
        <Sep />
        <Tool label="Help"><HelpIcon /></Tool>
        <Overflow />
        <span className="w-0.5" />
      </div>
      <div className="flex h-full items-center border-r border-b border-[#c3c7d5]">
        <Grip />
        <span className="flex h-[23px] w-[100px] items-stretch border border-[#a3a6b0] bg-white">
          <input aria-label="Find" placeholder="Find" className="min-w-0 flex-1 pl-1 text-xs outline-none placeholder:text-[#8a8a8a]" />
          <ComboArrow />
        </span>
        <Tool label="Find next"><FindArrow /></Tool>
        <Tool label="Find previous"><FindArrow up /></Tool>
        <Overflow />
        <span className="w-px" />
      </div>
    </div>
  )
}

function FormattingToolbar() {
  return (
    <div className="flex h-[31px] shrink-0 items-center">
      <div className="flex h-full items-center border-r border-[#c3c7d5]">
        <Grip />
        <Tool label="Styles and formatting"><StylesIcon /></Tool>
        <Combo label="Apply style" value="ConsPlusNormal" className="ml-2 w-[137px]" />
        <Combo label="Font name" value="Times New Roman" className="ml-2 w-[154px]" />
        <Combo label="Font size" value="12" className="mr-2 ml-2 w-[62px]" />
        <Tool label="Bold"><Letter kind="B" /></Tool>
        <Tool label="Italic"><Letter kind="I" /></Tool>
        <Tool label="Underline"><Letter kind="U" /></Tool>
        <Sep />
        <Tool label="Align left"><AlignIcon kind="left" /></Tool>
        <Tool label="Centered" active><AlignIcon kind="center" /></Tool>
        <Tool label="Align right"><AlignIcon kind="right" /></Tool>
        <Tool label="Justified"><AlignIcon kind="justify" /></Tool>
        <Sep />
        <Tool label="Numbering"><NumberedIcon /></Tool>
        <Tool label="Bullets"><BulletIcon /></Tool>
        <Tool label="Decrease indent"><IndentIcon /></Tool>
        <Tool label="Increase indent"><IndentIcon increase /></Tool>
        <Sep />
        <Tool label="Font color"><FontColorIcon /></Tool>
        <Drop label="Font color list" />
        <Tool label="Highlighting"><HighlightIcon /></Tool>
        <Drop label="Highlighting list" />
        <Tool label="Background color"><BucketIcon /></Tool>
        <Drop label="Background color list" />
        <Overflow />
      </div>
    </div>
  )
}

// ---------- rulers ----------

const CM = 37.8
const range = (from: number, to: number) => Array.from({ length: to - from + 1 }, (_, i) => from + i)

function HorizontalRuler() {
  const zero = 76.5
  const end = 719.5
  return (
    <svg width="796" height="25" viewBox="0 0 796 25" fill="none" aria-hidden="true" className="shrink-0">
      <rect x="0" y="3" width="796" height="18" fill="#fff" />
      <rect x=".5" y="3.500" width="76" height="17" fill="#f0f0f0" stroke="#9a9a9a" />
      <rect x={end} y="3.500" width="76" height="17" fill="#f0f0f0" stroke="#9a9a9a" />
      {range(-1, 18).map((n) => (
        <g key={n}>
          {n !== 0 && (
            <text x={zero + n * CM} y="17" textAnchor="middle" fontSize="12" fill="#222">
              {Math.abs(n)}
            </text>
          )}
          <path d={`M${zero + n * CM + 9} 12.500h1.200M${zero + n * CM + 28} 12.500h1.200`} stroke="#222" />
          <path d={`M${zero + n * CM + 19} 11v3.500`} stroke="#222" />
        </g>
      ))}
      <path d={`M${zero - CM - 10} 12.500h1.200M${zero - CM - 29} 12.500h1.200`} stroke="#222" />
      <path d={`M${zero - CM - 19} 11v3.500`} stroke="#222" />
      {range(1, 13).map((n) => (
        <path key={n} d={`M${zero + n * 47.1 - 2} 20.500h4M${zero + n * 47.1} 18v3`} stroke="#111" />
      ))}
      <path d={`M${zero - 5} 21.500v-3l5-5 5 5v3z`} fill="#f4f4f4" stroke="#777" />
      <path d={`M${end - 5} 21.500v-3l5-5 5 5v3z`} fill="#f4f4f4" stroke="#777" />
      <path d="M107.500 3.500h10v3l-5 5-5-5z" fill="#f4f4f4" stroke="#777" />
    </svg>
  )
}

function VerticalRuler() {
  const zero = 76.5
  return (
    <svg width="23" height="802" viewBox="0 0 23 802" fill="none" aria-hidden="true">
      <rect x="0" y="0" width="18" height="801" fill="#fff" />
      <rect x=".5" y=".5" width="17" height="75" fill="#f0eff1" stroke="#9a9a9a" />
      {range(-1, 19).map((n) => {
        const y = zero + n * CM
        return (
          <g key={n}>
            {n !== 0 && (
              <text x="16" y={y} transform={`rotate(-90 16 ${y})`} textAnchor="middle" fontSize="12" fill="#222">
                {Math.abs(n)}
              </text>
            )}
            <path d={`M9 ${y - 9.5}h1.200M9 ${y - 28.5}h1.200M7.500 ${y - 19}h3.500`} stroke="#222" />
          </g>
        )
      })}
    </svg>
  )
}

// ---------- document ----------

type Line = {
  text: ReactNode
  kind?: 'center' | 'fill' | 'plain'
  indent?: boolean
}

const lines: Line[] = [
  { text: 'РЕКОМЕНДАЦИИ', kind: 'center' },
  { text: 'ДЛЯ ФОРМИРОВАНИЯ ЭЛЕКТРОННЫХ ДОКУМЕНТОВ, ПРЕДСТАВЛЯЕМЫХ', kind: 'center' },
  { text: 'ДЛЯ ПРОВЕДЕНИЯ ГОСУДАРСТВЕННОЙ ЭКСПЕРТИЗЫ ПРОЕКТНОЙ', kind: 'center' },
  { text: 'ДОКУМЕНТАЦИИ И (ИЛИ) РЕЗУЛЬТАТОВ ИНЖЕНЕРНЫХ ИЗЫСКАНИЙ', kind: 'center' },
  { text: '(ред. от 16.03.2017)', kind: 'center' },
  { text: '' },
  { text: '' },
  { text: '' },
  { text: '1. Настоящие рекомендации по формированию электронных документов,', indent: true, kind: 'fill' },
  { text: 'представляемых в СПб ГАУ «ЦГЭ» для проведения государственной экспертизы проектной', kind: 'fill' },
  { text: 'документации и (или) результатов инженерных изысканий, разработаны на основании', kind: 'fill' },
  { text: 'Требований к формату электронных документов, представляемых для проведения', kind: 'fill' },
  { text: 'государственной экспертизы проектной документации и (или) результатов инженерных', kind: 'fill' },
  { text: 'изысканий, утвержденных приказом Министерства строительства и жилищно-', kind: 'fill' },
  { text: 'коммунального хозяйства Российской Федерации от 21.11.2014 № 728/пр.' },
  { text: 'Общие требования к составу проектной документации и содержанию разделов', indent: true, kind: 'fill' },
  { text: 'приведены в \u00a0Положении о составе проектной документации и требованиях к их', kind: 'fill' },
  { text: 'содержанию, утвержденном \u00a0постановлением Правительства Российской Федерации\u00a0\u00a0', kind: 'fill' },
  { text: 'от 16.02.2008 № 87. Для удобства подготовки, загрузки и последующей экспертизы', kind: 'fill' },
  { text: 'проектной документации и результатов инженерных изысканий настоящими', kind: 'fill' },
  { text: 'рекомендациями предложено изменение по оформлению отдельных разделов проектной', kind: 'fill' },
  { text: 'документации.' },
  { text: '2. Электронные документы на государственную экспертизу могут быть предоставлены\u00a0', indent: true, kind: 'fill' },
  { text: 'в следующих форматах:' },
  { text: '2.1 по проектной документации и (или) результатам инженерных изысканий,\u00a0\u00a0', indent: true, kind: 'fill' },
  { text: 'за исключением раздела «сметная документация»:' },
  {
    text: (
      <>
        а) <b>pdf, rtf, doc, docx, xls, xlsx</b> (для документов с текстовым содержанием приоритетным
      </>
    ),
    indent: true,
    kind: 'fill',
  },
  {
    text: (
      <>
        является формат <b>pdf</b>);
      </>
    ),
  },
  {
    text: (
      <>
        б) <b>pdf, dwg, dwx, jpeg</b> (для документов с графическим содержанием приоритетными
      </>
    ),
    indent: true,
    kind: 'fill',
  },
  {
    text: (
      <>
        являются форматы <b>pdf и dwg</b>);
      </>
    ),
  },
  { text: '' },
  { text: <b>Уважаемые заявители!</b>, indent: true },
  { text: <b>Обращаем Ваше внимание:</b>, indent: true },
  {
    text: (
      <>
        Если чертеж создан в формате dwg с использованием
        <span className="inline-block h-[18px] w-1 bg-[#c1c1c5] align-bottom" /> нестандартных шрифтов{'\u00a0\u00a0'}
      </>
    ),
    indent: true,
    kind: 'fill',
  },
  { text: 'или библиотек символов, с целью обеспечения возможности просмотра такого документа', kind: 'fill' },
  { text: 'экспертами учреждения, соответствующий электронный документ должен быть перед', kind: 'fill' },
  {
    text: (
      <>
        представлением на экспертизу экспортирован в формат <b>pdf</b>.
      </>
    ),
  },
  { text: '' },
  { text: '2.2 по разделу «сметная документация» электронные документы представляются:', indent: true },
  { text: '2.2.1. Сводка затрат, сводный сметный расчет стоимости строительства, объектные', indent: true, kind: 'fill' },
  {
    text: (
      <>
        сметные расчеты (сметы), сметные расчеты на отдельные виды затрат в формате <b>pdf, rtf, doc,</b>
      </>
    ),
    kind: 'fill',
  },
]

const lineStyles = {
  center: 'pl-9 text-center',
  fill: '[text-align-last:justify]',
  plain: '',
}

// Two rows in five are 19px, the rest 18px: the screen rounding of single-spaced 12pt text
function DocumentPage() {
  return (
    <article className="mx-auto mt-[38px] h-[1123px] w-[796px] shrink-0 border border-black bg-white pt-[76px] shadow-[3px_3px_0_#000]">
      <div className="mx-[75px] h-[971px] border border-[#c0c0c0] font-['Liberation_Serif','Times_New_Roman',serif] text-base text-black">
        {lines.map((line, i) => (
          <div
            key={i}
            className={`h-[18px] leading-[18px] whitespace-nowrap nth-[5n+2]:h-[19px] nth-[5n+4]:h-[19px] ${lineStyles[line.kind ?? 'plain']} ${line.indent ? 'pl-9' : ''}`}
          >
            {line.text}
          </div>
        ))}
      </div>
    </article>
  )
}

// ---------- scrollbars ----------

function ScrollArrow({ dir, label }: { dir: 'up' | 'down' | 'left' | 'right'; label: string }) {
  const paths = { up: 'M1 6l3-4 3 4z', down: 'M1 2l3 4 3-4z', left: 'M6 1L2 4l4 3z', right: 'M2 1l4 3-4 3z' }
  return (
    <button aria-label={label} className="flex size-[17px] shrink-0 items-center justify-center">
      <svg width="8" height="8" viewBox="0 0 8 8">
        <path d={paths[dir]} fill="#4a4a4a" />
      </svg>
    </button>
  )
}

function VerticalScroll() {
  return (
    <div className="flex w-4 shrink-0 flex-col items-center bg-[#f1f0f2]">
      <ScrollArrow dir="up" label="Scroll up" />
      <div className="flex h-[147px] w-3.5 flex-col items-center justify-center gap-0.5 rounded-xs border border-[#8c8c8e] bg-linear-to-r from-[#f4f4f4] to-[#c6c6c9]">
        <span className="h-px w-1.5 bg-[#555]" />
        <span className="h-px w-1.5 bg-[#555]" />
        <span className="h-px w-1.5 bg-[#555]" />
      </div>
      <div className="flex-1" />
      <ScrollArrow dir="down" label="Scroll down" />
      <div className="flex flex-col gap-0.5 pb-px">
        <button aria-label="Previous page" className="flex size-[15px] items-center justify-center rounded-xs border border-[#8c8c8e] bg-[#f4f4f6]">
          <svg width="8" height="10" viewBox="0 0 8 10">
            <path d="M0 4.500L4 .5l4 4zM0 9.500l4-4 4 4z" fill="#111" />
          </svg>
        </button>
        <button aria-label="Navigation" className="flex size-[15px] items-center justify-center rounded-xs border border-[#8c8c8e] bg-[#f4f4f6]">
          <svg width="9" height="9" viewBox="0 0 9 9">
            <circle cx="4.500" cy="4.500" r="3.500" fill="#a9c4e6" stroke="#56739b" />
          </svg>
        </button>
        <button aria-label="Next page" className="flex size-[15px] items-center justify-center rounded-xs border border-[#8c8c8e] bg-[#f4f4f6]">
          <svg width="8" height="10" viewBox="0 0 8 10">
            <path d="M0 .5h8l-4 4zM0 5.500h8l-4 4z" fill="#555" />
          </svg>
        </button>
      </div>
    </div>
  )
}

function HorizontalScroll() {
  return (
    <div className="flex h-[17px] shrink-0 items-start bg-[#f1f0f2]">
      <ScrollArrow dir="left" label="Scroll left" />
      <div className="flex h-[15px] flex-1 items-center justify-center gap-0.5 rounded-xs border border-[#8c8c8e] bg-linear-to-b from-[#ececee] to-[#c0c0c2]">
        <span className="h-1.5 w-px bg-[#555]" />
        <span className="h-1.5 w-px bg-[#555]" />
        <span className="h-1.5 w-px bg-[#555]" />
      </div>
      <ScrollArrow dir="right" label="Scroll right" />
      <span className="w-4" />
    </div>
  )
}

function Workspace() {
  return (
    <main className="flex min-w-0 flex-1 flex-col border-l-2 border-[#77787a]">
      <div className="flex min-h-0 flex-1">
        <div className="flex min-w-0 flex-1 flex-col">
          <div className="flex h-[25px] shrink-0 bg-[#f0f0f0]">
            <div className="w-[27px] shrink-0 pt-[3px] pl-[3px]">
              <button aria-label="Tab type" className="flex size-[18px] items-center justify-center border border-[#9a9a9a] bg-[#f4f4f4]">
                <span className="size-[7px] border-b-2 border-l-2 border-black" />
              </button>
            </div>
            <div className="flex min-w-0 flex-1 justify-center">
              <HorizontalRuler />
            </div>
          </div>
          <div className="flex min-h-0 flex-1 bg-[#f0eff1]">
            <div className="w-[26px] shrink-0 overflow-hidden pt-[39px] pl-[3px]">
              <VerticalRuler />
            </div>
            <div className="flex min-w-0 flex-1 overflow-hidden border-t border-l border-black bg-[#acaaab]">
              <DocumentPage />
            </div>
          </div>
        </div>
        <VerticalScroll />
      </div>
      <HorizontalScroll />
    </main>
  )
}

// ---------- sidebar ----------

function SectionHeader({ title, open = true }: { title: string; open?: boolean }) {
  return (
    <div className="flex h-[26px] items-center bg-linear-to-b from-[#dedede] to-[#efeff0] pr-[5px] pl-[5px]">
      <button aria-label={`Toggle ${title}`} className="flex size-[9px] items-center justify-center border border-[#6f6f6f] bg-white">
        <svg width="5" height="5" viewBox="0 0 5 5">
          <path d={open ? 'M0 2.500h5' : 'M0 2.500h5M2.500 0v5'} stroke="#000" />
        </svg>
      </button>
      <h3 className="ml-1 flex-1 text-xs font-bold text-[#2b3038]">{title}</h3>
      <button aria-label={`${title} options`}>
        <MoreIcon />
      </button>
    </div>
  )
}

function Group({ className = 'px-px', children }: { className?: string; children: ReactNode }) {
  return (
    <div className={`flex h-[30px] items-center border border-[#e4e4e6] bg-[#f9f9fb] ${className}`}>{children}</div>
  )
}

type SpinProps = { label: string; value: string; icon: keyof typeof fieldIconPaths }

function Spin({ label, value, icon }: SpinProps) {
  return (
    <div className="flex items-center gap-[5px]">
      <FieldIcon kind={icon} />
      <span className="flex h-[23px] min-w-0 flex-1 items-stretch border border-[#a3a6b0] bg-white p-px">
        <input aria-label={label} defaultValue={value} className="min-w-0 flex-1 pl-px text-xs outline-none" />
        <span className="flex w-[15px] flex-col">
          <button aria-label={`Increase ${label}`} className="flex flex-1 items-center justify-center border border-[#c6c6cb] bg-[#f0f0f2]">
            <svg width="5" height="3" viewBox="0 0 5 3">
              <path d="M0 3L2.500 0 5 3z" fill="#5a5a9c" />
            </svg>
          </button>
          <button aria-label={`Decrease ${label}`} className="flex flex-1 items-center justify-center border border-t-0 border-[#c6c6cb] bg-[#f0f0f2]">
            <svg width="5" height="3" viewBox="0 0 5 3">
              <path d="M0 0h5L2.500 3z" fill="#5a5a9c" />
            </svg>
          </button>
        </span>
      </span>
    </div>
  )
}

function PropertiesPanel() {
  return (
    <section className="my-[3px] flex w-[231px] flex-col border border-[#dddde0] bg-[#f0eff1]">
      <div className="flex h-[27px] items-center px-[9px] pb-0.5">
        <h2 className="flex-1 text-xs font-bold text-black">Properties</h2>
        <button aria-label="Close sidebar" className="-mr-1">
          <svg width="9" height="9" viewBox="0 0 9 9">
            <path d="M1 1l7 7M8 1L1 8" stroke="#4b4f57" strokeWidth="1.600" />
          </svg>
        </button>
      </div>

      <SectionHeader title="Text" />
      <div className="flex flex-col pt-px pb-1.5 pl-1.5">
        <div className="flex gap-1.5">
          <Combo label="Sidebar font" value="Times New Roman" className="w-[158px]" />
          <Combo label="Sidebar font size" value="12" className="w-[50px]" />
        </div>
        <div className="mt-[9px] flex">
          <Group>
            <Tool label="Bold text"><Letter kind="B" /></Tool>
            <Tool label="Italic text"><Letter kind="I" /></Tool>
            <Tool label="Underline text"><Letter kind="U" /></Tool>
            <Drop label="Underline styles" />
            <Tool label="Strikethrough"><StrikeIcon /></Tool>
            <Tool label="Shadow"><ShadowAIcon /></Tool>
          </Group>
          <Group className="ml-6 px-px">
            <Tool label="Increase font"><GrowIcon /></Tool>
            <Tool label="Decrease font"><GrowIcon down /></Tool>
          </Group>
        </div>
        <div className="mt-[11px] flex">
          <Group>
            <Tool label="Superscript"><ScriptIcon up /></Tool>
            <Tool label="Subscript"><ScriptIcon /></Tool>
          </Group>
          <Group className="ml-2 px-px">
            <Tool label="Character spacing"><KerningIcon /></Tool>
            <Drop label="Character spacing list" />
          </Group>
          <Group className="ml-4 px-px">
            <Tool label="Text color"><FontColorIcon /></Tool>
            <Drop label="Text color list" />
          </Group>
          <Group className="ml-1.5 px-px">
            <Tool label="Highlight color"><HighlightIcon /></Tool>
            <Drop label="Highlight color list" />
          </Group>
        </div>
      </div>

      <SectionHeader title="Paragraph" />
      <div className="flex flex-col pb-[11px] pl-1.5">
        <div className="flex">
          <Group>
            <Tool label="Paragraph left"><AlignIcon kind="left" /></Tool>
            <Tool label="Paragraph center" active><AlignIcon kind="center" /></Tool>
            <Tool label="Paragraph right"><AlignIcon kind="right" /></Tool>
            <Tool label="Paragraph justify"><AlignIcon kind="justify" /></Tool>
          </Group>
        </div>
        <div className="mt-1.5 flex">
          <Group>
            <Tool label="Bullet list"><BulletIcon /></Tool>
            <Drop label="Bullet styles" />
            <Tool label="Numbered list"><NumberedIcon /></Tool>
            <Drop label="Numbering styles" />
          </Group>
          <Group className="ml-[18px] px-0.5">
            <BucketIcon bar={false} />
            <FrameSwatch />
            <Drop label="Paragraph background" />
          </Group>
        </div>
        <div className="mt-px grid grid-cols-[109px_102px] gap-x-1.5">
          <span className="text-xs leading-[18px]">
            <span className="underline">S</span>pacing:
          </span>
          <span className="text-xs leading-[18px]">
            <span className="underline">I</span>ndent:
          </span>
          <div className="flex">
            <Group>
              <Tool label="Increase spacing"><SpacingIcon /></Tool>
              <Tool label="Decrease spacing"><SpacingIcon inward /></Tool>
            </Group>
          </div>
          <div className="flex">
            <Group>
              <Tool label="Increase paragraph indent"><IndentIcon increase /></Tool>
              <Tool label="Decrease paragraph indent"><IndentIcon /></Tool>
              <Tool label="Hanging indent"><HangingIcon /></Tool>
            </Group>
          </div>
        </div>
        <div className="mt-3 grid grid-cols-[109px_102px] items-start gap-x-1.5 gap-y-2">
          <Spin label="Above paragraph" value="0,00 cm" icon="above" />
          <Spin label="Before text" value="0,00 cm" icon="before" />
          <Spin label="Below paragraph" value="0,00 cm" icon="below" />
          <Spin label="After text" value="0,00 cm" icon="after" />
          <div className="flex">
            <Group>
              <Tool label="Line spacing"><LineSpacingIcon /></Tool>
              <Drop label="Line spacing list" />
            </Group>
          </div>
          <Spin label="First line" value="0,97 cm" icon="first" />
        </div>
      </div>

      <SectionHeader title="Page" open={false} />
    </section>
  )
}

function Sidebar() {
  return (
    <aside className="flex shrink-0 border-r border-[#8e8e90] bg-[#f0eff1]">
      {/* splitter */}
      <div className="flex w-[9px] justify-center border-r border-[#8f9092] bg-[#f7f7f8]">
        <span className="mt-[434px] h-[34px] border-l-2 border-dotted border-[#777]" />
      </div>
      <div className="flex pl-[3px]">
        <PropertiesPanel />
        <div className="flex w-[39px] flex-col items-center pt-2.5">
          <button aria-label="Sidebar settings" className="flex h-[26px] items-start pt-1">
            <svg width="10" height="11" viewBox="0 0 10 11">
              <path d="M1 1.500h7M1 4h7M1 6.500h7" stroke="#4b5563" />
              <path d="M4.500 7.500h5L7 10.500z" fill="#000" />
            </svg>
          </button>
          <span className="h-px w-6 bg-[#d8d8da]" />
          <button aria-label="Properties tab" className="mt-1 flex size-8 items-center justify-center rounded-md border border-[#aeb0b4] bg-[#f7f7f8]">
            <CubeIcon />
          </button>
          <button aria-label="Styles tab" className="mt-0.5 flex h-[34px] items-center">
            <StarsIcon />
          </button>
          <button aria-label="Gallery tab" className="mt-0.5 flex h-[34px] items-center">
            <PhotoIcon />
          </button>
          <button aria-label="Navigator tab" className="flex h-[34px] items-center">
            <NavigatorIcon />
          </button>
        </div>
      </div>
    </aside>
  )
}

// ---------- status bar ----------

function PageGlyph({ pages, blue = false }: { pages: 1 | 2; blue?: boolean }) {
  const stroke = blue ? BLUE : '#8a8d92'
  const fill = blue ? '#bcd8f3' : '#fbfbfb'
  return (
    <svg width={pages * 10} height="12" viewBox={`0 0 ${pages * 10} 12`} aria-hidden="true">
      <path d="M.5 .5h5l3 3v8h-8zM5.500 .5v3h3" fill={fill} stroke={stroke} />
      {pages === 2 && <path d="M10.500 .5h5l3 3v8h-8zM15.500 .5v3h3" fill={fill} stroke={stroke} />}
    </svg>
  )
}

function ZoomButton({ plus = false }: { plus?: boolean }) {
  return (
    <button aria-label={plus ? 'Zoom in' : 'Zoom out'} className="shrink-0">
      <svg width="12" height="12" viewBox="0 0 12 12">
        <circle cx="6" cy="6" r="5.200" fill="#c3e0f2" stroke="#3b5a70" strokeWidth="1.200" />
        <path d={plus ? 'M3 6h6M6 3v6' : 'M3 6h6'} stroke={INK} strokeWidth="1.500" />
      </svg>
    </button>
  )
}

function StatusBar() {
  return (
    <footer className="flex h-[23px] shrink-0 items-stretch bg-[#f0eff1] pt-1 pb-0.5 text-xs leading-[17px] text-[#111]">
      <span className="flex-[363] border-r border-[#a8a8aa] pl-2.5">Page 1 / 4</span>
      <span className="flex-[349] border-r border-[#a8a8aa] pl-[5px]">Default</span>
      <span className="flex-[356] border-r border-[#a8a8aa] text-center">Russian</span>
      <span className="w-[46px] border-r border-[#a8a8aa] pl-1">INSRT</span>
      <span className="w-[34px] border-r border-[#a8a8aa] pl-1">STD</span>
      <span className="w-4 border-r border-[#a8a8aa]" />
      <span className="w-[29px] border-r border-[#a8a8aa]" />
      <span className="flex-[445] border-r border-[#a8a8aa]" />
      <div className="flex w-[76px] items-center gap-[5px] border-r border-[#a8a8aa] pl-[7px]">
        <button aria-label="Single page"><PageGlyph pages={1} /></button>
        <button aria-label="Several pages"><PageGlyph pages={2} blue /></button>
        <button aria-label="Book view"><PageGlyph pages={2} /></button>
      </div>
      <div className="flex w-[143px] items-center gap-1 border-r border-[#a8a8aa] px-1.5">
        <ZoomButton />
        <input
          type="range"
          aria-label="Zoom level"
          defaultValue={50}
          className="h-3 min-w-0 flex-1 appearance-none bg-[linear-gradient(#77797d,#77797d),linear-gradient(#77797d,#77797d)] bg-size-[100%_1px,1px_10px] bg-position-[center,31%_center] bg-no-repeat [&::-webkit-slider-thumb]:size-2 [&::-webkit-slider-thumb]:appearance-none [&::-webkit-slider-thumb]:rounded-full [&::-webkit-slider-thumb]:border [&::-webkit-slider-thumb]:border-[#24425a] [&::-webkit-slider-thumb]:bg-[#5b8db5]"
        />
        <ZoomButton plus />
      </div>
      <span className="w-[45px] pl-1">100 %</span>
    </footer>
  )
}

function Watermark() {
  return (
    <div className="pointer-events-none absolute right-[58px] bottom-8 flex h-[104px] w-[384px] items-center rounded-2xl bg-white/50 pl-[18px]">
      <svg width="70" height="70" viewBox="0 0 70 70" aria-hidden="true" className="shrink-0 opacity-70">
        <g fill="#5c5c64">
          <path d="M30 0v41L2 14Q4 2 16 1 23 0 30 0zM41 0v41L68 14Q66 2 54 1 48 0 41 0z" />
          <path d="M0 31l35 33 35-33v17Q69 66 56 69 35 71 14 69 1 66 0 48z" />
        </g>
      </svg>
      <span className="ml-[18px] font-['Noto_Sans',sans-serif] text-[45px] leading-none font-medium text-[#6e6e72]/60">MegaProgz</span>
    </div>
  )
}

export default function App() {
  return (
    <div className="relative flex h-screen flex-col overflow-hidden bg-[#f0eff1] font-['Open_Sans','Noto_Sans',sans-serif]">
      <TitleBar />
      <MenuBar />
      <div className="flex shrink-0 flex-col border-b-2 border-[#85868a] bg-linear-to-b from-[#d5d9e8] to-[#dfe4f3]">
        <StandardToolbar />
        <FormattingToolbar />
      </div>
      <div className="flex min-h-0 flex-1">
        <Workspace />
        <Sidebar />
      </div>
      <StatusBar />
      <Watermark />
    </div>
  )
}
